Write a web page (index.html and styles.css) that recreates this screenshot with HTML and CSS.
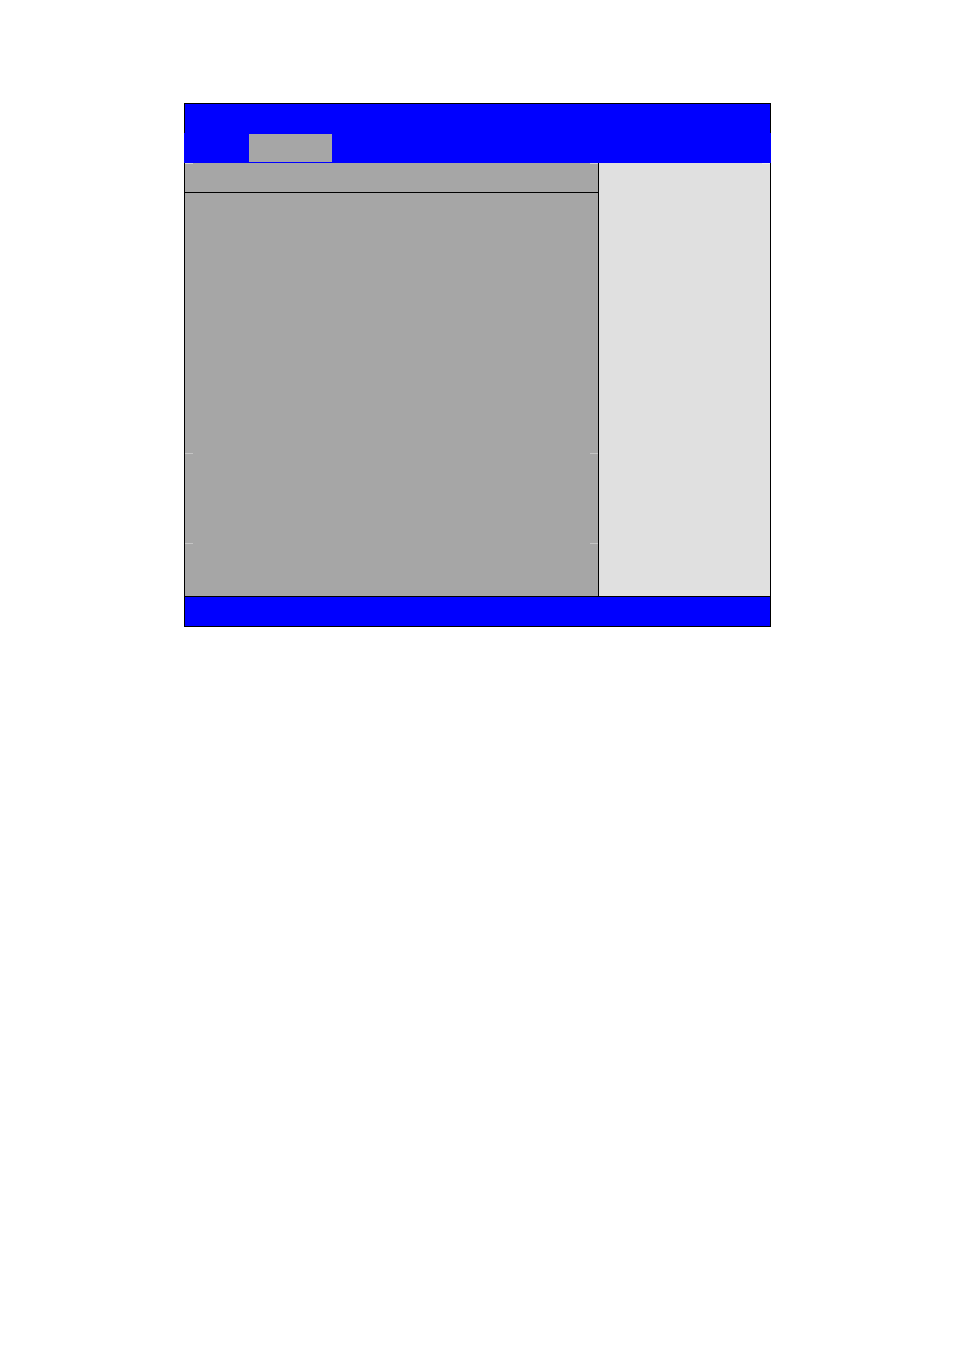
FILE: index.html
```
<!DOCTYPE html>
<html lang="en">
<head>
  <meta charset="UTF-8">
  <title>Setup Screen</title>
  <link rel="stylesheet" href="styles.css">
</head>
<body>
  <div class="setup">
    <!-- Title bar with the menu tab -->
    <div class="title-bar"></div>
    <div class="menu-bar">
      <div class="menu-tab"></div>
    </div>
    <!-- Main area: options on the left, help on the right -->
    <div class="main">
      <div class="options">
        <div class="options-head"></div>
        <div class="options-body">
          <span class="tick tick-left tick-a"></span>
          <span class="tick tick-right tick-a"></span>
          <span class="tick tick-left tick-b"></span>
          <span class="tick tick-right tick-b"></span>
        </div>
        <span class="tick tick-left tick-top"></span>
        <span class="tick tick-right tick-top"></span>
      </div>
      <div class="help">
        <span class="tick tick-right tick-top help-tick"></span>
      </div>
    </div>
    <!-- Bottom status bar -->
    <div class="status-bar"></div>
  </div>
</body>
</html>
```

FILE: styles.css
```
/* Page */
body {
  margin: 0;
  background-color: #fff;
  font-family: 'Liberation Sans', Arial, sans-serif;
}

/* Setup frame */
.setup {
  width: 585px;
  margin: 103px 0 0 184px;
  border: 1px solid #000;
  background-color: #0000ff;
}
.title-bar {
  height: 29px;
  background-color: #0000ff;
}
.menu-bar {
  height: 30px;
  margin: 0 -1px;
  padding-left: 65px;
  background-color: #0000ff;
  display: flex;
  align-items: flex-start;
  box-sizing: border-box;
}
.menu-tab {
  width: 83px;
  height: 28px;
  margin-top: 1px;
  background-color: #a6a6a6;
}

/* Main area */
.main {
  display: grid;
  grid-template-columns: 414px 171px;
  height: 433px;
}
.options {
  position: relative;
  background-color: #a6a6a6;
  border-right: 1px solid #000;
  display: flex;
  flex-direction: column;
}
.options-head {
  height: 29px;
  border-bottom: 1px solid #000;
}
.options-body {
  position: relative;
  flex: 1;
}
.help {
  position: relative;
  background-color: #e0e0e0;
}

.tick {
  position: absolute;
  width: 8px;
  height: 1px;
  background-color: #c4c4c4;
}
.tick-left {
  left: 0;
}
.tick-right {
  right: 0;
}
.tick-a {
  top: 260px;
}
.tick-b {
  top: 350px;
}
.tick-top {
  top: 0;
  background-color: #d2d2d2;
}
.help-tick {
  background-color: #f0f0f0;
}

/* Status bar */
.status-bar {
  height: 29px;
  border-top: 1px solid #000;
  background-color: #0000ff;
}
```
